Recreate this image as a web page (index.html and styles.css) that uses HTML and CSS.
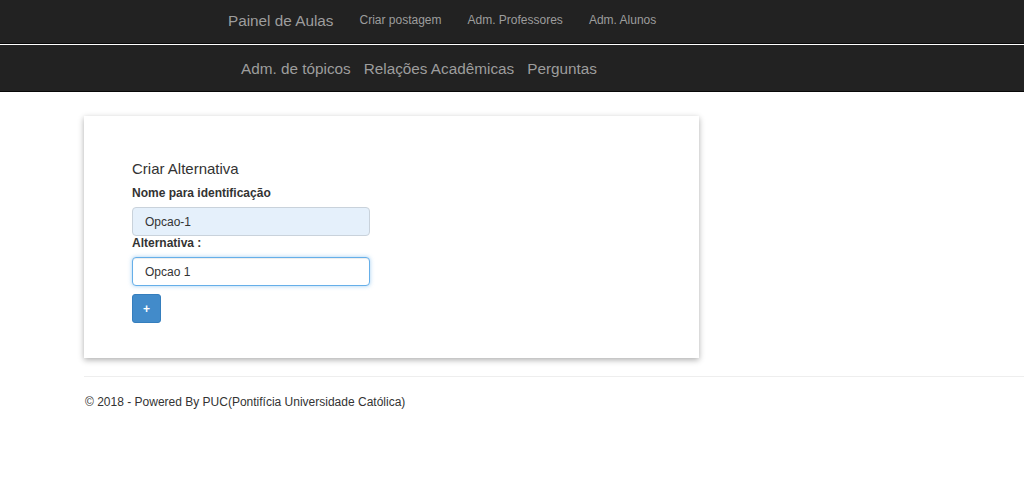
FILE: index.html
```html
<!DOCTYPE html>
<html lang="pt">
<head>
<meta charset="utf-8">
<title>Criar Alternativa</title>
<link rel="stylesheet" href="styles.css">
</head>
<body>
<nav class="nav-top">
  <a class="brand" href="#">Painel de Aulas</a>
  <a class="nav-link" href="#">Criar postagem</a>
  <a class="nav-link" href="#">Adm. Professores</a>
  <a class="nav-link" href="#">Adm. Alunos</a>
</nav>
<nav class="nav-sub">
  <a class="sub-link" href="#">Adm. de tópicos</a>
  <a class="sub-link" href="#">Relações Acadêmicas</a>
  <a class="sub-link" href="#">Perguntas</a>
</nav>
<main class="page">
  <section class="card">
    <h4 class="card-title">Criar Alternativa</h4>
    <label class="field-label" for="nome">Nome para identificação</label>
    <input class="field autofill" id="nome" type="text" value="Opcao-1">
    <label class="field-label" for="alt">Alternativa :</label>
    <input class="field focused" id="alt" type="text" value="Opcao 1">
    <button class="btn-add" type="button">+</button>
  </section>
  <hr class="rule">
  <footer class="footer">© 2018 - Powered By PUC(Pontifícia Universidade Católica)</footer>
</main>
</body>
</html>
```
FILE: styles.css
```css
* { box-sizing: border-box; }
body {
  margin: 0;
  background: #fff;
  font-family: "Liberation Sans", Arial, sans-serif;
  color: #333;
}
a { text-decoration: none; }

.nav-top {
  display: flex;
  align-items: center;
  height: 44px;
  padding-left: 228px;
  padding-bottom: 2px;
  gap: 26px;
  background: #222;
  border-bottom: 1px solid #080808;
}
.brand {
  font-size: 15.3px;
  color: #9d9d9d;
  line-height: 20px;
}
.nav-link {
  font-size: 12px;
  color: #9d9d9d;
  line-height: 17px;
}

.nav-sub {
  display: flex;
  align-items: center;
  height: 47px;
  margin-top: 1px;
  padding-left: 241px;
  padding-top: 1px;
  gap: 13px;
  background: #222;
  border-bottom: 1px solid #080808;
}
.sub-link {
  font-size: 15.3px;
  color: #9d9d9d;
  line-height: 20px;
}

.page {
  padding-left: 84px;
  padding-top: 24px;
}
.card {
  width: 615px;
  display: flex;
  flex-direction: column;
  align-items: flex-start;
  padding: 43px 48px 35px;
  background: #fff;
  box-shadow: 0 2px 6px rgba(0, 0, 0, 0.32);
}
.card-title {
  margin: 0 0 7px;
  font-size: 15px;
  font-weight: normal;
  line-height: 20px;
  color: #333;
}
.field-label {
  font-size: 12px;
  font-weight: bold;
  line-height: 15px;
  color: #333;
}
.field {
  width: 238px;
  height: 29px;
  margin-top: 6px;
  padding: 0 12px;
  font-family: "Liberation Sans", Arial, sans-serif;
  font-size: 12px;
  color: #333;
  border: 1px solid #ccc;
  border-radius: 4px;
  outline: none;
}
.autofill {
  background: #e5f0fb;
  border-color: #c9d2db;
}
.focused {
  background: #fff;
  border-color: #66afe9;
  box-shadow: inset 0 1px 1px rgba(0, 0, 0, 0.075), 0 0 4px rgba(102, 175, 233, 0.6);
}
.btn-add {
  width: 29px;
  height: 29px;
  margin-top: 8px;
  padding: 0;
  font-family: "Liberation Sans", Arial, sans-serif;
  font-size: 12px;
  font-weight: bold;
  color: #fff;
  background: #428bca;
  border: 1px solid #357ebd;
  border-radius: 3px;
}

.rule {
  margin: 18px 0 0;
  border: 0;
  border-top: 1px solid #eee;
}
.footer {
  margin-top: 17px;
  padding-left: 1px;
  font-size: 12px;
  line-height: 17px;
  color: #333;
}
```
